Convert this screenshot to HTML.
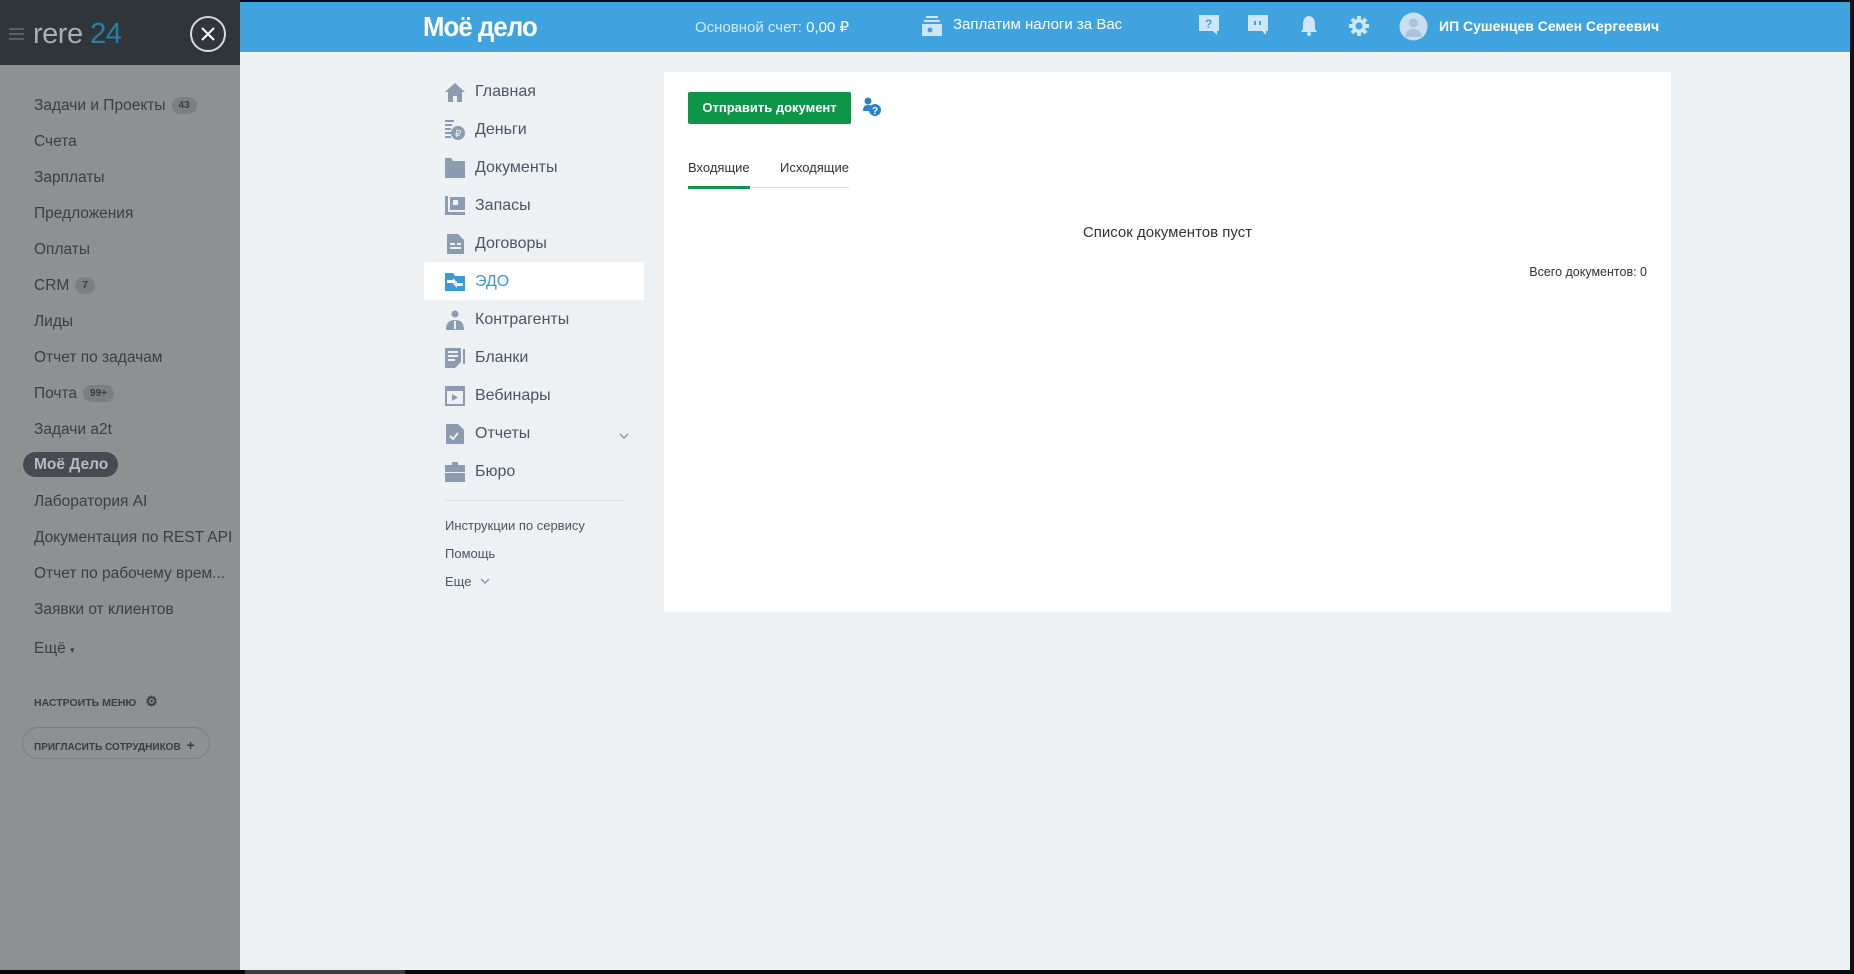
<!DOCTYPE html>
<html><head><meta charset="utf-8"><style>
*{margin:0;padding:0;box-sizing:border-box}
body{width:1854px;height:974px;overflow:hidden;background:#edf1f4;font-family:"Liberation Sans",Arial,sans-serif;position:relative}
.abs{position:absolute}
#topbar{left:0;top:0;width:1854px;height:2px;background:#0b0f14}
#hdr{left:240px;top:2px;width:1610px;height:50px;background:#3ea3df}
#rs{left:1850px;top:0;width:4px;height:974px;background:#111}
#bot{left:0;top:970px;width:1854px;height:4px;background:#05080d}
#bot2{left:245px;top:970px;width:160px;height:4px;background:#3a3d42}
#sbtop{left:0;top:0;width:240px;height:65px;background:#30353c}
#sb{left:0;top:65px;width:240px;height:905px;background:#8f9092}
.si{position:absolute;left:34px;font-size:15.5px;color:#3b3e43;white-space:nowrap}
.badge{display:inline-block;background:#7d7e81;color:#3b3e43;font-size:10px;font-weight:bold;border-radius:9px;padding:3px 7px;margin-left:6px;vertical-align:2px}
.nav{position:absolute;left:475px;font-size:16px;color:#4b5563}
.nic{position:absolute;left:445px;width:20px;height:20px}
.lnk{position:absolute;left:445px;font-size:13px;color:#4b5563}
.hi{position:absolute;top:15px}
</style></head><body>
<div class="abs" id="topbar"></div>
<div class="abs" id="hdr"></div>
<div class="abs" id="sbtop"></div>
<div class="abs" id="sb"></div>
<div class="abs" style="left:9px;top:28px;width:15px;height:2px;background:#5b6068;box-shadow:0 5px 0 #5b6068,0 10px 0 #5b6068"></div>
<div class="abs" style="left:33px;top:18px;font-size:29px;color:#a9aeb3;letter-spacing:-0.5px">rere <span style="color:#2a80a3">24</span></div>
<div class="abs" style="left:190px;top:16px;width:36px;height:36px;border:2px solid #d7d9db;border-radius:50%"></div>
<svg class="abs" style="left:200px;top:26px" width="16" height="16"><path d="M2 2L14 14M14 2L2 14" stroke="#fff" stroke-width="2"/></svg>
<div class="si" style="top:97px">Задачи и Проекты<span class="badge">43</span></div>
<div class="si" style="top:133px">Счета</div>
<div class="si" style="top:169px">Зарплаты</div>
<div class="si" style="top:205px">Предложения</div>
<div class="si" style="top:241px">Оплаты</div>
<div class="si" style="top:277px">CRM<span class="badge">7</span></div>
<div class="si" style="top:313px">Лиды</div>
<div class="si" style="top:349px">Отчет по задачам</div>
<div class="si" style="top:385px">Почта<span class="badge">99+</span></div>
<div class="si" style="top:421px">Задачи a2t</div>
<div class="abs" style="left:23px;top:452px;width:95px;height:25px;background:#464a52;border-radius:13px"></div>
<div class="si" style="top:456px;font-weight:bold;color:#b8bbbf">Моё Дело</div>
<div class="si" style="top:493px">Лаборатория AI</div>
<div class="si" style="top:529px">Документация по REST API</div>
<div class="si" style="top:565px">Отчет по рабочему врем...</div>
<div class="si" style="top:601px">Заявки от клиентов</div>
<div class="si" style="top:640px">Ещё <span style="font-size:9px">▾</span></div>
<div class="si" style="top:693px;font-size:10.5px;font-weight:bold">НАСТРОИТЬ МЕНЮ <span style="font-size:14px;margin-left:6px">⚙</span></div>
<div class="abs" style="left:22px;top:727px;width:188px;height:32px;border:1px solid #7b7c7f;border-radius:16px"></div>
<div class="si" style="top:737px;font-size:10px;font-weight:bold">ПРИГЛАСИТЬ СОТРУДНИКОВ <span style="font-size:14px;margin-left:3px">+</span></div>
<div class="abs" style="left:423px;top:11px;font-size:28px;font-weight:bold;color:#fff;letter-spacing:-1px;transform:scaleX(0.92);transform-origin:left">Моё дело</div>
<div class="abs" style="left:695px;top:18px;font-size:15px;color:#d4e9f8">Основной счет: <span style="color:#fff">0,00 ₽</span></div>
<svg class="hi" style="left:922px" width="20" height="22"><rect x="4" y="1" width="12" height="2" fill="#cfe6f7"/><rect x="2" y="5" width="16" height="2" fill="#cfe6f7"/><rect x="0" y="9" width="20" height="12" fill="#cfe6f7"/><circle cx="8" cy="15" r="2.5" fill="#3ea3df"/></svg>
<div class="abs" style="left:953px;top:16px;font-size:15px;color:#fff">Заплатим налоги за Вас</div>
<svg class="hi" style="left:1199px" width="20" height="22"><path d="M0 0H20V16H18V20L14 16H0Z" fill="#cfe6f7"/><text x="6" y="13" font-size="12" font-weight="bold" fill="#3ea3df" font-family="Liberation Sans">?</text></svg>
<svg class="hi" style="left:1248px" width="20" height="22"><path d="M0 0H20V16H18V20L14 16H0Z" fill="#cfe6f7"/><rect x="6" y="6" width="2" height="4" fill="#3ea3df"/><rect x="11" y="6" width="2" height="4" fill="#3ea3df"/></svg>
<svg class="hi" style="left:1300px" width="18" height="22"><path d="M9 1C5 1 3 5 3 9V14L1 17H17L15 14V9C15 5 13 1 9 1Z" fill="#cfe6f7"/><circle cx="9" cy="19" r="2" fill="#cfe6f7"/></svg>
<svg class="hi" style="left:1348px" width="22" height="22"><g fill="#cfe6f7"><circle cx="11" cy="11" r="7"/><rect x="9" y="1" width="4" height="20"/><rect x="1" y="9" width="20" height="4"/><rect x="9" y="1" width="4" height="20" transform="rotate(45 11 11)"/><rect x="9" y="1" width="4" height="20" transform="rotate(-45 11 11)"/></g><circle cx="11" cy="11" r="3.5" fill="#3ea3df"/></svg>
<svg class="abs" style="left:1399px;top:12px" width="29" height="29"><circle cx="14.5" cy="14.5" r="14" fill="#c9dff0"/><circle cx="14.5" cy="11" r="4.5" fill="#a9c4dc"/><path d="M6 25C7 19 10 17 14.5 17S22 19 23 25Z" fill="#a9c4dc"/></svg>
<div class="abs" style="left:1439px;top:18px;font-size:14px;font-weight:bold;color:#fff">ИП Сушенцев Семен Сергеевич</div>
<div class="abs" style="left:424px;top:262px;width:220px;height:38px;background:#fff"></div>
<svg class="nic" style="top:82px"><path d="M10 1L0 10H3V20H8V14H12V20H17V10H20Z" fill="#8c9bb0"/></svg>
<div class="nav" style="top:83px">Главная</div>
<svg class="nic" style="top:120px"><g fill="#8c9bb0"><rect x="0" y="0" width="9" height="2"/><rect x="0" y="4" width="7" height="2"/><rect x="0" y="8" width="6" height="2"/><rect x="0" y="12" width="6" height="2"/><rect x="0" y="16" width="6" height="2"/><circle cx="13" cy="13" r="7"/></g><text x="10" y="17" font-size="10" fill="#edf1f4" font-family="Liberation Sans">₽</text></svg>
<div class="nav" style="top:121px">Деньги</div>
<svg class="nic" style="top:158px"><path d="M0 0H6L8 3H20V20H0Z" fill="#8c9bb0"/></svg>
<div class="nav" style="top:159px">Документы</div>
<svg class="nic" style="top:196px"><path d="M0 0H3V16H20V19H0Z" fill="#8c9bb0"/><rect x="5" y="1" width="15" height="13" fill="#8c9bb0"/><rect x="8" y="4" width="5" height="5" fill="#edf1f4"/></svg>
<div class="nav" style="top:197px">Запасы</div>
<svg class="nic" style="top:234px"><path d="M2 0H13L19 6V20H2Z" fill="#8c9bb0"/><g fill="#edf1f4"><rect x="5" y="9" width="5" height="2"/><rect x="5" y="13" width="11" height="2"/><rect x="12" y="9" width="4" height="2"/></g></svg>
<div class="nav" style="top:235px">Договоры</div>
<svg class="nic" style="top:272px"><path d="M0 1H8L10 4H20V19H0Z" fill="#3a9ad9"/><path d="M2 8H8V6L11 9.5L8 13V11H2Z M18 11H12V9L9 12.5L12 16V14H18Z" fill="#fff"/></svg>
<div class="nav" style="top:273px;color:#3a9ad9">ЭДО</div>
<svg class="nic" style="top:310px"><circle cx="10" cy="4" r="3.5" fill="#8c9bb0"/><path d="M1 20C1 12 5 10 10 10S19 12 19 20Z" fill="#8c9bb0"/><rect x="9" y="11" width="2" height="8" fill="#edf1f4"/></svg>
<div class="nav" style="top:311px">Контрагенты</div>
<svg class="nic" style="top:348px"><path d="M0 0H16V14L10 20H0Z" fill="#8c9bb0"/><rect x="18" y="1" width="2" height="15" fill="#8c9bb0"/><g fill="#edf1f4"><rect x="3" y="3" width="10" height="2"/><rect x="3" y="7" width="10" height="2"/><rect x="3" y="11" width="7" height="2"/></g></svg>
<div class="nav" style="top:349px">Бланки</div>
<svg class="nic" style="top:386px"><rect x="0" y="0" width="20" height="20" fill="#8c9bb0"/><rect x="2" y="5" width="16" height="13" fill="#edf1f4"/><path d="M7 8L13 11.5L7 15Z" fill="#8c9bb0"/></svg>
<div class="nav" style="top:387px">Вебинары</div>
<svg class="nic" style="top:424px"><path d="M1 0H13L19 6V20H1Z" fill="#8c9bb0"/><path d="M5 12L8 15L13 9" stroke="#edf1f4" stroke-width="2" fill="none"/></svg>
<div class="nav" style="top:425px">Отчеты</div>
<svg class="abs" style="left:619px;top:433px" width="10" height="6"><path d="M1 1L5 5L9 1" stroke="#8c9bb0" stroke-width="1.5" fill="none"/></svg>
<svg class="nic" style="top:462px"><rect x="7" y="0" width="6" height="3" fill="#8c9bb0"/><rect x="0" y="3" width="20" height="7" fill="#8c9bb0"/><rect x="0" y="11" width="20" height="9" fill="#8c9bb0"/></svg>
<div class="nav" style="top:463px">Бюро</div>
<div class="abs" style="left:445px;top:500px;width:178px;height:1px;background:#d5dae0"></div>
<div class="lnk" style="top:518px">Инструкции по сервису</div>
<div class="lnk" style="top:546px">Помощь</div>
<div class="lnk" style="top:574px">Еще</div>
<svg class="abs" style="left:480px;top:578px" width="10" height="6"><path d="M1 1L5 5L9 1" stroke="#8c9bb0" stroke-width="1.5" fill="none"/></svg>
<div class="abs" style="left:664px;top:72px;width:1007px;height:540px;background:#fff"></div>
<div class="abs" style="left:688px;top:92px;width:163px;height:32px;background:#0e9648;border-radius:2px;color:#fff;font-size:13px;font-weight:bold;text-align:center;line-height:32px">Отправить документ</div>
<svg class="abs" style="left:862px;top:97px" width="20" height="20"><circle cx="6" cy="4" r="3.5" fill="#2a82c8"/><path d="M1 14C1 9 3 8 6 8S10 9 10 12V14Z" fill="#2a82c8"/><circle cx="13" cy="13" r="6" fill="#2a82c8"/><text x="10" y="17" font-size="10" font-weight="bold" fill="#fff" font-family="Liberation Sans">?</text></svg>
<div class="abs" style="left:688px;top:160px;font-size:13px;color:#333">Входящие</div>
<div class="abs" style="left:780px;top:160px;font-size:13px;color:#333">Исходящие</div>
<div class="abs" style="left:688px;top:187px;width:161px;height:1px;background:#d9dde1"></div>
<div class="abs" style="left:688px;top:186px;width:62px;height:3px;background:#0e9648"></div>
<div class="abs" style="left:664px;top:224px;width:1007px;text-align:center;font-size:15px;color:#333">Список документов пуст</div>
<div class="abs" style="left:1400px;top:265px;width:247px;text-align:right;font-size:12.5px;color:#333">Всего документов: 0</div>
<div class="abs" id="rs"></div>
<div class="abs" id="bot"></div>
<div class="abs" id="bot2"></div>
</body></html>
